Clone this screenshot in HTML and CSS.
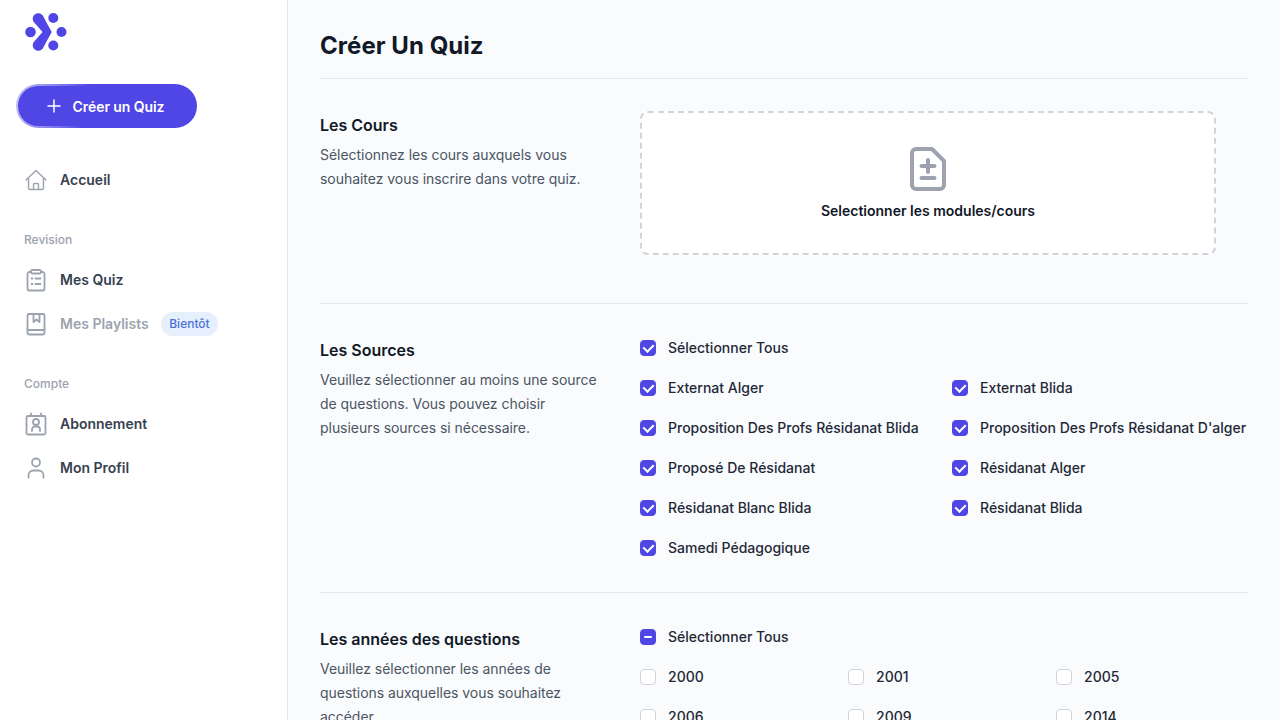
FILE: index.html
```html
<!DOCTYPE html>
<html>
<head>
  <meta charset="UTF-8">
  <title>Créer Un Quiz</title>
  <link rel="stylesheet" href="styles.css">
</head>
<body>
  <div class="layout">
    <aside class="sidebar">
      <svg class="logo" width="42" height="38" viewBox="0 0 42 38" fill="#4f46e5">
        <path d="M8.800 9 L17.500 19 L8.800 29 A5.500 5.500 0 0 0 17.800 35.500 Q22 27.500 26.700 19 Q22 10.500 17.800 2.500 A5.500 5.500 0 0 0 8.800 9z"/>
        <circle cx="5.500" cy="19" r="5.300"/>
        <circle cx="28.300" cy="5" r="5"/>
        <circle cx="36.500" cy="19" r="5"/>
        <circle cx="28.300" cy="32.500" r="5"/>
      </svg>
      <a class="create-button" href="#">
        <svg width="16" height="16" viewBox="0 0 16 16" fill="none" stroke="#fff" stroke-width="1.500" stroke-linecap="round"><path d="M8 2v12M2 8h12"/></svg>
        Créer un Quiz
      </a>
      <nav class="nav">
        <a class="nav-item" href="#">
          <svg class="nav-icon thin" viewBox="0 0 24 24"><path d="M2 12 12 2.500 22 12"/><path d="M4.500 10v10a1.500 1.500 0 0 0 1.500 1.500h12a1.500 1.500 0 0 0 1.500-1.500V10"/><path d="M9.500 21.500V16.500a1 1 0 0 1 1-1h3a1 1 0 0 1 1 1v5"/></svg>
          Accueil
        </a>
        <div class="nav-label">Revision</div>
        <a class="nav-item" href="#">
          <svg class="nav-icon" viewBox="0 0 24 24"><path d="M7 4H5.500a2 2 0 0 0-2 2v14.500a2 2 0 0 0 2 2h13a2 2 0 0 0 2-2V6a2 2 0 0 0-2-2H17"/><rect x="7" y="2" width="10" height="3.500" rx="1.500"/><path d="M7.500 10.500h1M11.500 10.500h5M7.500 16h1M11.500 16h5"/></svg>
          Mes Quiz
        </a>
        <a class="nav-item is-disabled" href="#">
          <svg class="nav-icon" viewBox="0 0 24 24"><rect x="3.500" y="2" width="17" height="20.500" rx="1.500"/><path d="M3.500 18h17"/><path d="M9.500 2v8l3-2.500 3 2.500V2"/></svg>
          Mes Playlists
          <span class="badge">Bientôt</span>
        </a>
        <div class="nav-label">Compte</div>
        <a class="nav-item" href="#">
          <svg class="nav-icon" viewBox="0 0 24 24"><rect x="2.500" y="4" width="19" height="18.500" rx="1.500"/><path d="M7 1.500V4M17 1.500V4"/><circle cx="12" cy="10" r="3"/><path d="M8 19v-1.500a3 3 0 0 1 3-3h2a3 3 0 0 1 3 3V19"/></svg>
          Abonnement
        </a>
        <a class="nav-item" href="#">
          <svg class="nav-icon" viewBox="0 0 24 24"><circle cx="12" cy="6.500" r="4"/><path d="M4.500 21.500v-2a5 5 0 0 1 5-5h5a5 5 0 0 1 5 5v2"/></svg>
          Mon Profil
        </a>
      </nav>
    </aside>

    <main class="main">
      <h1 class="page-title">Créer Un Quiz</h1>

      <section class="section section-courses">
        <div class="section-info">
          <h2>Les Cours</h2>
          <p>Sélectionnez les cours auxquels vous souhaitez vous inscrire dans votre quiz.</p>
        </div>
        <div class="dropzone">
          <svg width="36" height="44" viewBox="0 0 36 44" fill="none" stroke="#9ca3af" stroke-width="4" stroke-linecap="round" stroke-linejoin="round">
            <path d="M6 2h16l12 12v24a4 4 0 0 1-4 4H6a4 4 0 0 1-4-4V6a4 4 0 0 1 4-4z"/>
            <path d="M18 13v12M11.500 19h13M11.500 31h13"/>
          </svg>
          <span>Selectionner les modules/cours</span>
        </div>
      </section>

      <section class="section">
        <div class="section-info">
          <h2>Les Sources</h2>
          <p>Veuillez sélectionner au moins une source de questions. Vous pouvez choisir plusieurs sources si nécessaire.</p>
        </div>
        <div class="options">
          <label class="option"><span class="box checked"></span>Sélectionner Tous</label>
          <div class="option-grid two">
            <label class="option"><span class="box checked"></span>Externat Alger</label>
            <label class="option"><span class="box checked"></span>Externat Blida</label>
            <label class="option"><span class="box checked"></span>Proposition Des Profs Résidanat Blida</label>
            <label class="option"><span class="box checked"></span>Proposition Des Profs Résidanat D'alger</label>
            <label class="option"><span class="box checked"></span>Proposé De Résidanat</label>
            <label class="option"><span class="box checked"></span>Résidanat Alger</label>
            <label class="option"><span class="box checked"></span>Résidanat Blanc Blida</label>
            <label class="option"><span class="box checked"></span>Résidanat Blida</label>
            <label class="option"><span class="box checked"></span>Samedi Pédagogique</label>
          </div>
        </div>
      </section>

      <section class="section">
        <div class="section-info">
          <h2>Les années des questions</h2>
          <p>Veuillez sélectionner les années de questions auxquelles vous souhaitez accéder.</p>
        </div>
        <div class="options">
          <label class="option"><span class="box partial"></span>Sélectionner Tous</label>
          <div class="option-grid three">
            <label class="option"><span class="box"></span>2000</label>
            <label class="option"><span class="box"></span>2001</label>
            <label class="option"><span class="box"></span>2005</label>
            <label class="option"><span class="box"></span>2006</label>
            <label class="option"><span class="box"></span>2009</label>
            <label class="option"><span class="box"></span>2014</label>
          </div>
        </div>
      </section>
    </main>
  </div>
</body>
</html>
```

FILE: styles.css
```css
* {
  box-sizing: border-box;
}
html, body {
  height: 100%;
  margin: 0;
  overflow: hidden;
}
body {
  font-family: Inter, "Liberation Sans", sans-serif;
  color: #111827;
  background-color: #f9fbfd;
}
a {
  text-decoration: none;
}
.layout {
  display: flex;
  height: 720px;
  overflow: hidden;
}

/* Sidebar */
.sidebar {
  flex: 0 0 288px;
  padding: 13px 16px 0;
  background-color: #fff;
  border-right: 1px solid #e5e7eb;
}
.logo {
  display: block;
  margin-left: 9px;
}
.create-button {
  display: flex;
  align-items: center;
  justify-content: center;
  gap: 11px;
  width: 181px;
  height: 44px;
  margin-top: 33px;
  padding-right: 3px;
  border: 2px solid transparent;
  border-radius: 22px;
  background: linear-gradient(#4f46e5, #4f46e5) padding-box,
    linear-gradient(100deg, #c7c4f5, #4f46e5 40%) border-box;
  color: #fff;
  font-size: 14px;
  font-weight: 600;
  letter-spacing: -0.08px;
}
.nav {
  margin-top: 30px;
}
.nav-item {
  display: flex;
  align-items: center;
  height: 44px;
  padding-left: 8px;
  padding-bottom: 2px;
  color: #374151;
  font-size: 14px;
  font-weight: 600;
}
.nav-item.is-disabled {
  color: #9ca3af;
}
.nav-icon {
  flex: none;
  width: 24px;
  height: 24px;
  margin-top: 2px;
  margin-right: 12px;
  fill: none;
  stroke: #9ca3af;
  stroke-width: 1.8;
  stroke-linecap: round;
  stroke-linejoin: round;
}
.nav-icon.thin {
  stroke-width: 1.4;
}
.nav-label {
  margin-top: 20px;
  padding: 0 8px;
  height: 36px;
  line-height: 36px;
  color: #9ca3af;
  font-size: 12px;
  font-weight: 500;
}
.badge {
  margin-top: 2px;
  margin-left: 12px;
  padding: 0 8.500px;
  border-radius: 12px;
  line-height: 24px;
  background-color: #e6effc;
  color: #4a72d8;
  font-size: 12px;
  font-weight: 500;
}

/* Main */
.main {
  flex: 1;
  min-width: 0;
  padding: 30px 32px 0;
}
.page-title {
  margin: 0;
  padding-bottom: 16px;
  font-size: 24px;
  line-height: 32px;
  font-weight: 700;
  letter-spacing: 0.05px;
}
.section {
  display: flex;
  gap: 32px;
  padding: 32px 0;
  border-top: 1px solid #e5e7eb;
}
.section-courses {
  padding-bottom: 48px;
}
.section-info {
  flex: 0 0 288px;
}
.section-info h2 {
  margin: 0 0 4px;
  font-size: 16px;
  line-height: 28px;
  font-weight: 600;
  letter-spacing: -0.01px;
}
.section-info p {
  margin: 0;
  color: #4b5563;
  font-size: 14px;
  line-height: 24px;
  letter-spacing: -0.04px;
}
.dropzone {
  display: flex;
  flex-direction: column;
  align-items: center;
  justify-content: center;
  gap: 11px;
  width: 576px;
  height: 144px;
  border: 2px dashed #d1d5db;
  border-radius: 8px;
  background-color: #fff;
  font-size: 14px;
  font-weight: 600;
}
.options {
  flex: 1;
  min-width: 0;
}
.option-grid {
  display: grid;
  gap: 16px;
  margin-top: 16px;
}
.option-grid.two {
  grid-template-columns: repeat(2, 1fr);
}
.option-grid.three {
  grid-template-columns: repeat(3, 1fr);
}
.option {
  display: flex;
  align-items: flex-start;
  gap: 12px;
  height: 24px;
  color: #1f2937;
  font-size: 14px;
  font-weight: 480;
  line-height: 23px;
  white-space: nowrap;
}
.box {
  flex: none;
  position: relative;
  width: 16px;
  height: 16px;
  margin-top: 4px;
  border: 1px solid #d1d5db;
  border-radius: 4px;
  background-color: #fff;
}
.box.checked, .box.partial {
  border-color: #4f46e5;
  background-color: #4f46e5;
}
.box.checked::after {
  content: "";
  position: absolute;
  left: 4px;
  top: 1px;
  width: 5px;
  height: 8px;
  border: solid #fff;
  border-width: 0 2px 2px 0;
  transform: rotate(45deg);
}
.box.partial::after {
  content: "";
  position: absolute;
  left: 3px;
  top: 6px;
  width: 8px;
  height: 2px;
  border-radius: 1px;
  background-color: #fff;
}
```
